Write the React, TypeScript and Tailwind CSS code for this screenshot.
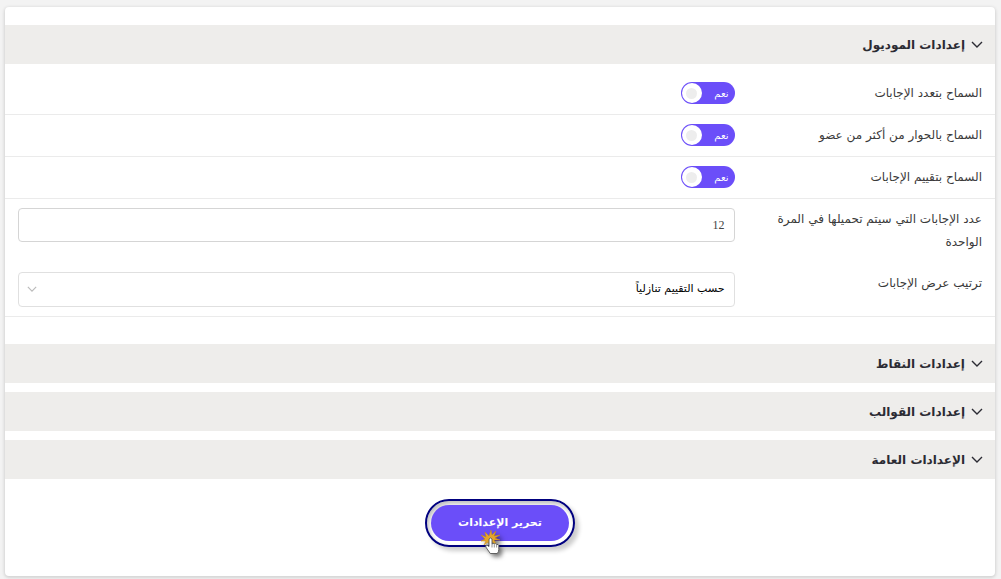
import { FC, ReactNode, useState } from "react";

const Chevron: FC<{ className?: string }> = ({ className }) => (
    <svg viewBox="0 0 12 7" className={className} fill="none" stroke="currentColor" strokeWidth="1.4" aria-hidden="true">
        <path d="M1 1l5 5 5-5" />
    </svg>
);

// cursor with the click burst behind it
const ClickCursor: FC = () => (
    <svg viewBox="0 0 28 30" className="pointer-events-none absolute left-[54px] top-[28px] h-[30px] w-[28px] drop-shadow-[3px_3px_2px_rgba(0,0,0,0.5)]" aria-hidden="true">
        <path
            d="M10 1l1 5 4-4-2 5 6-1-5 3 5 2-6 0 2 4-4-2-2 3-2-3-4 3 2-4-5 0 4-2-4-4 5 2-1-5 4 4z"
            fill="#e5a52a"
            stroke="#c98a14"
            strokeWidth="0.5"
        />
        <path
            d="M8 10q1.500-2 3 0v5q1.200-1.200 2.300 0q1.200-1 2.300 0.500q1.700-0.500 2.200 1v4q0 2-1.500 4h-7l-4.500-6.500q-0.500-2 1.200-2l2 1.500z"
            fill="#fff"
            stroke="#555"
            strokeWidth="0.900"
        />
        <path d="M11 15v3.500M13.300 15.500v3M15.600 16v2.500" stroke="#777" strokeWidth="0.800" />
    </svg>
);

const SectionBar: FC<{ title: string; open?: boolean }> = ({ title, open = false }) => (
    <h2>
        <button type="button" aria-expanded={open} className="flex h-[39px] w-full items-center gap-[6px] bg-[#eeedeb] px-3 text-[12px] font-bold text-[#2b2b33]">
            <Chevron className="h-[7px] w-3" />
            {title}
        </button>
    </h2>
);

const Row: FC<{ id: string; label: string; border?: boolean; children: ReactNode }> = ({ id, label, border = true, children }) => (
    <div className={border ? "grid grid-cols-[1fr_3fr] border-b border-[#ebebeb] py-[9px]" : "grid grid-cols-[1fr_3fr] py-[9px]"}>
        <label htmlFor={id} className="px-[13px] text-[12px] leading-[23px] text-[#3a3a3a]">
            {label}
        </label>
        <div className="px-[13px]">{children}</div>
    </div>
);

const Toggle: FC<{ id: string }> = ({ id }) => {
    const [on, setOn] = useState(true);

    return (
        <label className="relative flex h-[22px] w-[54px] cursor-pointer items-center justify-between rounded-full bg-[#6b4ef9] ps-[6px] pe-px">
            <input id={id} type="checkbox" role="switch" checked={on} onChange={() => setOn(!on)} className="sr-only" />
            <span className="text-[10px] text-white">{on ? "نعم" : "لا"}</span>
            <span className="flex size-5 items-center justify-center rounded-full bg-white">
                <span className="size-[11px] rounded-full bg-[#ededed]"></span>
            </span>
        </label>
    );
};

export default function App() {
    return (
        <div dir="rtl" className="min-h-screen bg-[#f3f3f3] pt-[7px] pr-[6px] pb-[3px] pl-[5px] font-['DejaVu_Sans',sans-serif]">
            <form onSubmit={(e) => e.preventDefault()} className="rounded-[4px] bg-white pt-[18px] pb-[29px] shadow-[0_1px_3px_1px_#d4d4d4]">
                <SectionBar title="إعدادات الموديول" open />

                <div className="pt-[9px] pb-[27px]">
                    <Row id="multi" label="السماح بتعدد الإجابات">
                        <Toggle id="multi" />
                    </Row>
                    <Row id="talk" label="السماح بالحوار من أكثر من عضو">
                        <Toggle id="talk" />
                    </Row>
                    <Row id="rate" label="السماح بتقييم الإجابات">
                        <Toggle id="rate" />
                    </Row>
                    <Row id="count" label="عدد الإجابات التي سيتم تحميلها في المرة الواحدة" border={false}>
                        <input
                            id="count"
                            type="text"
                            defaultValue="12"
                            className="h-[34px] w-full rounded-[4px] border border-[#d5d5d5] px-[9px] font-['Liberation_Serif',serif] text-[12px] text-[#444]"
                        />
                    </Row>
                    <Row id="order" label="ترتيب عرض الإجابات">
                        <div className="relative">
                            <select id="order" className="h-[35px] w-full appearance-none rounded-[4px] border border-[#e0e0e0] bg-white px-[9px] text-[11px] text-black">
                                <option>حسب التقييم تنازلياً</option>
                            </select>
                            <Chevron className="pointer-events-none absolute top-[14px] left-[9px] h-[6px] w-[10px] text-[#bbb]" />
                        </div>
                    </Row>
                </div>

                <div className="flex flex-col gap-[9px]">
                    <SectionBar title="إعدادات النقاط" />
                    <SectionBar title="إعدادات القوالب" />
                    <SectionBar title="الإعدادات العامة" />
                </div>

                <div className="mt-[20px] flex justify-center">
                    <div className="relative rounded-full border-2 border-[#00007f] p-1 shadow-[4px_4px_4px_rgba(0,0,0,0.2),inset_2px_3px_4px_rgba(0,0,0,0.25)]">
                        <button type="submit" className="h-9 w-[138px] rounded-full bg-[#6b4ef9] text-[11px] font-bold text-white">
                            تحرير الإعدادات
                        </button>
                        <ClickCursor />
                    </div>
                </div>
            </form>
        </div>
    );
}
